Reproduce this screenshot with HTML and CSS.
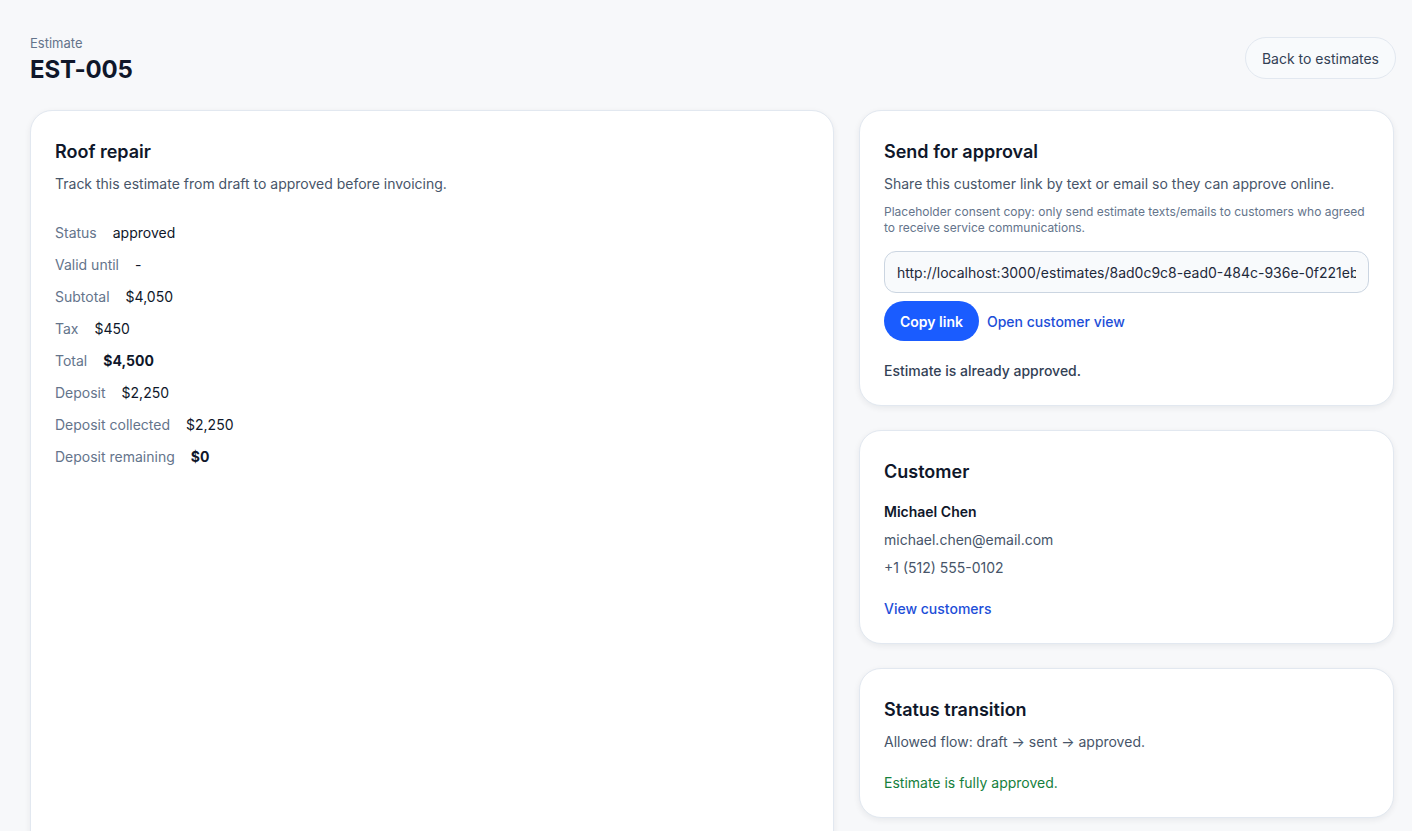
FILE: index.html
```html
<!DOCTYPE html>
<html lang="en">
<head>
    <meta charset="UTF-8">
    <meta name="viewport" content="width=device-width, initial-scale=1.0">
    <title>EST-005 · Estimate</title>
    <link rel="stylesheet" href="styles.css">
</head>
<body>
    <main class="page">
        <header class="page-header">
            <div class="page-heading">
                <div class="eyebrow">Estimate</div>
                <h1 class="page-title">EST-005</h1>
            </div>
            <a class="btn-ghost" href="#">Back to estimates</a>
        </header>

        <div class="layout">
            <section class="card card-main">
                <h2 class="card-title">Roof repair</h2>
                <p class="card-desc">Track this estimate from draft to approved before invoicing.</p>

                <dl class="facts">
                    <div class="fact"><dt>Status</dt><dd>approved</dd></div>
                    <div class="fact"><dt>Valid until</dt><dd>-</dd></div>
                    <div class="fact"><dt>Subtotal</dt><dd>$4,050</dd></div>
                    <div class="fact"><dt>Tax</dt><dd>$450</dd></div>
                    <div class="fact"><dt>Total</dt><dd class="strong">$4,500</dd></div>
                    <div class="fact"><dt>Deposit</dt><dd>$2,250</dd></div>
                    <div class="fact"><dt>Deposit collected</dt><dd>$2,250</dd></div>
                    <div class="fact"><dt>Deposit remaining</dt><dd class="strong">$0</dd></div>
                </dl>
            </section>

            <aside class="side">
                <section class="card">
                    <h2 class="card-title">Send for approval</h2>
                    <p class="card-desc">Share this customer link by text or email so they can approve online.</p>
                    <p class="note">Placeholder consent copy: only send estimate texts/emails to customers who agreed to receive service communications.</p>
                    <input class="link-input" type="text" readonly value="http://localhost:3000/estimates/8ad0c9c8-ead0-484c-936e-0f221eb7c4a2">
                    <div class="actions">
                        <button class="btn-primary" type="button">Copy link</button>
                        <a class="link" href="#">Open customer view</a>
                    </div>
                    <p class="status-msg">Estimate is already approved.</p>
                </section>

                <section class="card">
                    <h2 class="card-title">Customer</h2>
                    <div class="customer">
                        <div class="customer-name">Michael Chen</div>
                        <div class="customer-line">michael.chen@email.com</div>
                        <div class="customer-line">+1 (512) 555-0102</div>
                    </div>
                    <a class="link link-block" href="#">View customers</a>
                </section>

                <section class="card">
                    <h2 class="card-title">Status transition</h2>
                    <p class="flow">Allowed flow: draft → sent → approved.</p>
                    <p class="success">Estimate is fully approved.</p>
                </section>
            </aside>
        </div>
    </main>
</body>
</html>
```

FILE: styles.css
```css
:root {
    --bg: #f7f8fa;
    --ink: #0f172a;
    --text: #475569;
    --muted: #64748b;
    --line: #e2e8f0;
    --blue: #1a5cff;
    --link: #1d4ed8;
}

* { box-sizing: border-box; }

body {
    margin: 0;
    background: var(--bg);
    color: var(--ink);
    font-family: Inter, "Noto Sans", sans-serif;
    font-size: 14px;
}

.page { padding: 34px 16px 0 30px; }

.page-header {
    display: flex; align-items: flex-start; justify-content: space-between;
    margin-bottom: 25px;
}
.eyebrow { font-size: 13px; line-height: 18px; color: var(--muted); }
.page-title { margin: 3px 0 0; font-size: 24px; line-height: 30px; font-weight: 700; letter-spacing: -0.2px; }

.btn-ghost {
    display: inline-flex; align-items: center;
    height: 42px; margin-top: 3px; padding: 0 16px;
    border: 1px solid var(--line); border-radius: 999px;
    background: #f8fafc; color: #334155;
    font-size: 14px; text-decoration: none;
}

.layout {
    display: grid;
    grid-template-columns: 804fr 535fr;
    gap: 25px;
    margin-right: 2px;
}

.side { display: flex; flex-direction: column; gap: 24px; }

.card {
    background: #fff;
    border: 1px solid var(--line);
    border-radius: 22px;
    padding: 28px 24px 24px;
    box-shadow: 0 2px 6px rgba(15, 23, 42, 0.07);
}
.card-main { min-height: 760px; }

.card-title { margin: 0; font-size: 18px; line-height: 26px; font-weight: 600; }
.card-desc { margin: 8px 0 0; line-height: 22px; color: var(--text); }

.facts { margin: 28px 0 0; display: flex; flex-direction: column; gap: 12px; }
.fact { display: flex; gap: 16px; line-height: 20px; }
.fact dt { color: var(--muted); }
.fact dd { margin: 0; color: var(--ink); }
.fact dd.strong { font-weight: 700; }

.note { margin: 9px 0 0; font-size: 12px; line-height: 16px; color: var(--muted); }

.link-input {
    display: block; width: 100%; height: 42px;
    margin-top: 15px; padding: 0 12px;
    border: 1px solid #cbd5e1; border-radius: 12px;
    background: #f8fafc; color: #1e293b;
    font: inherit; font-size: 14px;
    outline: none;
}

.actions { display: flex; align-items: center; gap: 8px; margin-top: 8px; }
.btn-primary {
    height: 40px; padding: 0 16px;
    border: 0; border-radius: 999px;
    background: var(--blue); color: #fff;
    font: inherit; font-size: 14px; font-weight: 600;
}
.link { color: var(--link); font-weight: 500; text-decoration: none; }

.status-msg { margin: 20px 0 0; line-height: 20px; color: #334155; font-weight: 500; }

.customer { margin-top: 17px; display: flex; flex-direction: column; gap: 8px; line-height: 20px; }
.customer-name { font-weight: 600; color: var(--ink); }
.customer-line { color: var(--text); }
.link-block { display: block; margin-top: 21px; line-height: 20px; }

.flow { margin: 9px 0 0; line-height: 20px; color: var(--text); }
.success { margin: 21px 0 0; line-height: 20px; color: #15803d; }
```
